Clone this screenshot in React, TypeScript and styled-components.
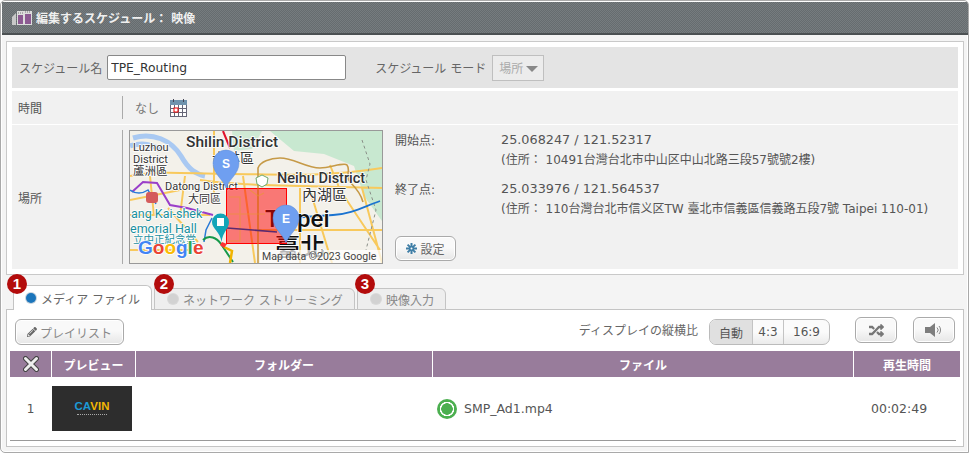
import React from "react";
import styled, { createGlobalStyle } from "styled-components";
import { FaPencilAlt, FaRandom } from "react-icons/fa";

const FONT = `"DejaVu Sans", "Noto Sans CJK JP", sans-serif`;

const GlobalStyle = createGlobalStyle`
  html, body { margin: 0; padding: 0; background: #fff; }
  body { font-family: ${FONT}; font-size: 12px; color: #555; }
  * { box-sizing: border-box; }
`;

const Frame = styled.div`
  width: 969px;
  height: 453px;
  border: 1px solid #a9a9a9;
  border-radius: 5px 5px 0 5px;
  background: #f4f4f4;
  overflow: hidden;
  box-shadow: inset 0 0 0 1px #fff;
`;

const Header = styled.div`
  height: 33px;
  margin: 1px 0 0 1px;
  display: flex;
  align-items: center;
  gap: 4px;
  padding: 0 0 0 10px;
  color: #f0f0f0;
  font-size: 12px;
  font-weight: 700;
  background: repeating-conic-gradient(#666c6f 0 25%, #767c7f 0 50%) 0 0 / 2px 2px;
  border-bottom: 2px solid #4b5052;
`;

const Body = styled.div`
  display: flex;
  flex-direction: column;
  padding: 6px 4px 0 5px;
`;

const Panel = styled.div`
  height: 234px;
  border: 1px solid #c9c9c9;
  background: #fff;
  padding: 5px;
  display: flex;
  flex-direction: column;
`;

const NameRow = styled.div`
  height: 41px;
  flex: none;
  background: #e4e4e4;
  display: flex;
  align-items: center;
  padding-left: 7px;
`;

const Field = styled.span`
  color: #666;
  font-size: 12px;
  white-space: nowrap;
`;

const NameInput = styled.input`
  width: 239px;
  height: 25px;
  border: 1px solid #888;
  border-radius: 2px;
  background: #fff;
  font-family: ${FONT};
  font-size: 12.3px;
  color: #333;
  padding: 0 3px;
  margin: 0 29px 0 5px;
`;

const Mode = styled.div`
  width: 52px;
  height: 26px;
  margin-left: 6px;
  border: 1px solid #bfbfbf;
  background: #ececec;
  color: #aaa;
  font-size: 12px;
  display: flex;
  align-items: center;
  padding-left: 6px;
  gap: 3px;
`;

const Caret = styled.i`
  width: 0;
  height: 0;
  border-left: 6px solid transparent;
  border-right: 6px solid transparent;
  border-top: 6px solid #888;
  margin-top: 2px;
`;

const InfoRow = styled.div<{ $h: number; $top: number }>`
  height: ${(p) => p.$h}px;
  margin-top: ${(p) => p.$top}px;
  flex: none;
  background: #f1f1f1;
  display: flex;
  align-items: center;
`;

const RowLabel = styled.div`
  width: 110px;
  padding-left: 6px;
  color: #555;
  font-size: 12px;
  flex: none;
`;

const RowValue = styled.div`
  align-self: stretch;
  flex: 1;
  margin: 5px 0;
  border-left: 1px solid #aaa;
  padding-left: 12px;
  display: flex;
  align-items: center;
  gap: 11px;
  color: #777;
`;

const PlaceValue = styled(RowValue)`
  padding-left: 6px;
  gap: 12px;
  align-items: flex-start;
`;

const MapBox = styled.div`
  width: 254px;
  height: 134px;
  border: 1px solid #999;
  flex: none;
  overflow: hidden;
`;

const Coords = styled.div`
  flex: 1;
  display: flex;
  flex-direction: column;
  color: #555;
  font-size: 12px;
`;

const CoordBlock = styled.div`
  display: grid;
  grid-template-columns: 106px 1fr;
  grid-auto-rows: 19px;
  align-items: center;
  white-space: nowrap;
  height: 49px;
`;

const Numeric = styled.span`
  font-size: 12.8px;
`;

const Sub = styled.div`
  grid-column: 2;
`;

const SoftButton = styled.button`
  display: inline-flex;
  align-items: center;
  justify-content: center;
  gap: 3px;
  border: 1px solid #aaa;
  border-radius: 6px;
  background: linear-gradient(#f9f9f9 0 45%, #e6e6e6 100%);
  color: #666;
  font-family: ${FONT};
  font-size: 12px;
  padding: 0;
  box-shadow: inset 0 0 0 1px #fff;
`;

const SettingButton = styled(SoftButton)`
  width: 61px;
  height: 25px;
  margin-top: 8px;
`;

const TabBar = styled.div`
  height: 35px;
  display: flex;
  align-items: flex-end;
  padding-left: 7px;
  margin-bottom: -1px;
`;

const Tab = styled.div<{ $active?: boolean; $w: number }>`
  position: relative;
  width: ${(p) => p.$w}px;
  height: ${(p) => (p.$active ? 25 : 22)}px;
  margin-right: 2px;
  background: ${(p) => (p.$active ? "#fff" : "#eee")};
  border: 1px solid #c4c4c4;
  border-bottom: ${(p) => (p.$active ? "none" : "1px solid #c4c4c4")};
  border-radius: 0 6px 0 0;
  display: flex;
  align-items: center;
  gap: 5px;
  padding-left: ${(p) => (p.$active ? 12 : 13)}px;
  color: ${(p) => (p.$active ? "#666" : "#888")};
  font-size: 12px;
  white-space: nowrap;
  z-index: ${(p) => (p.$active ? 2 : 1)};
`;

const Dot = styled.i<{ $on?: boolean }>`
  width: 10px;
  height: 10px;
  border-radius: 50%;
  flex: none;
  background: ${(p) => (p.$on ? "#1b75bb" : "#d2d2d2")};
  box-shadow: 0 0 0 1px ${(p) => (p.$on ? "#c7d3dd" : "#d8d8d8")};
`;

const Badge = styled.b<{ $left: number; $top: number }>`
  position: absolute;
  left: ${(p) => p.$left}px;
  top: ${(p) => p.$top}px;
  width: 20px;
  height: 20px;
  border-radius: 50%;
  background: #b30c0c;
  color: #fff;
  font-family: "Liberation Sans", sans-serif;
  font-size: 15px;
  line-height: 20px;
  text-align: center;
`;

const Content = styled.div`
  height: 138px;
  background: #fff;
  border: 1px solid #c4c4c4;
  padding: 8px 3px 0;
`;

const Toolbar = styled.div`
  height: 33px;
  display: flex;
  align-items: flex-start;
  padding: 0 5px;
`;

const PlaylistButton = styled(SoftButton)`
  width: 109px;
  height: 26px;
  margin-top: 1px;
  color: #888;
`;

const AspectLabel = styled.span`
  margin-left: auto;
  margin-right: 11px;
  line-height: 27px;
  color: #666;
`;

const Segments = styled.div`
  display: flex;
  width: 121px;
  height: 26px;
  margin-top: 1px;
  border: 1px solid #bbb;
  border-radius: 7px;
  overflow: hidden;
  background: linear-gradient(#fbfbfb 0 50%, #ebebeb 100%);
`;

const Segment = styled.div<{ $on?: boolean; $w: number }>`
  width: ${(p) => p.$w}px;
  display: flex;
  align-items: center;
  justify-content: center;
  color: #555;
  font-size: 12px;
  background: ${(p) => (p.$on ? "#e0e0e0" : "transparent")};
  & + & {
    border-left: 1px solid #c4c4c4;
  }
`;

const IconButton = styled(SoftButton)<{ $gap: number }>`
  width: 42px;
  height: 26px;
  margin-top: -1px;
  margin-left: ${(p) => p.$gap}px;
  color: #777;
  font-size: 15px;
`;

const GridRow = styled.div`
  display: grid;
  grid-template-columns: 41px 84px 297px 421px 1fr;
  width: 950px;
`;

const HeadCell = styled.div`
  height: 26px;
  background: #987c9b;
  color: #fff;
  font-weight: 700;
  font-size: 12px;
  display: flex;
  align-items: center;
  justify-content: center;
  border-left: 1px solid #fff;
  &:first-child {
    border-left: none;
  }
`;

const DataRow = styled(GridRow)`
  height: 64px;
  border-bottom: 1px solid #999;
  align-items: center;
  width: 946px;
  color: #555;
  font-size: 12.5px;
`;

const RowNumber = styled.div`
  text-align: center;
  font-size: 12px;
`;

const Thumb = styled.div`
  width: 80px;
  height: 45px;
  background: #2d2d2d;
  margin-left: 1px;
  display: flex;
  flex-direction: column;
  align-items: center;
  justify-content: center;
`;

const LogoText = styled.div`
  font-family: "Liberation Sans", sans-serif;
  font-weight: 700;
  font-size: 11.5px;
  line-height: 9px;
  color: #f2b705;
`;

const LogoBlue = styled.span`
  color: #1c9ad6;
`;

const LogoLine = styled.div`
  width: 30px;
  height: 1px;
  margin-top: 3px;
  border-top: 1px dotted #aaa;
`;

const FileCell = styled.div`
  display: flex;
  align-items: center;
  gap: 7px;
  padding-left: 5px;
`;

const Status = styled.i`
  width: 20px;
  height: 20px;
  border-radius: 50%;
  flex: none;
  background: radial-gradient(circle, #4caf50 0 5.5px, #fff 6px 7px, #4caf50 7.5px);
`;

const Duration = styled.div`
  padding-left: 18px;
`;

const Film = () => (
  <svg width="20" height="16" viewBox="0 0 20 16">
    <path d="M0 7 4 3v12H0z" fill="#c8c8c8" />
    <rect x="5" y="1" width="15" height="14" fill="#dcdcdc" />
    <rect x="6" y="5" width="5" height="9" fill="#8c5a92" />
    <rect x="13" y="4" width="6" height="10" fill="#8c5a92" />
    <path d="M6 3h1M8 3h1M10 3h1M13 2h1M15 2h1M17 2h1" stroke="#777" />
  </svg>
);

const Calendar = () => (
  <svg width="17" height="18" viewBox="0 0 17 18">
    <rect x="0.5" y="1.5" width="16" height="16" fill="#fff" stroke="#667" />
    <rect x="0" y="1" width="17" height="5" fill="#6f93ad" />
    <path d="M3.5 0v3M13.5 0v3" stroke="#445" />
    <path d="M4.5 6v11M8.5 6v11M12.5 6v11M1 9.5h15M1 13.5h15" stroke="#667" />
    <rect x="4" y="9" width="4" height="4" fill="#fff" stroke="#e00" />
  </svg>
);

const Cross = () => (
  <svg width="16" height="16" viewBox="0 0 16 16">
    <path d="M2.5 2.5 13.5 13.5M13.5 2.5 2.5 13.5" stroke="#444" strokeWidth="5" strokeLinecap="round" />
    <path d="M2.5 2.5 13.5 13.5M13.5 2.5 2.5 13.5" stroke="#eee" strokeWidth="3" strokeLinecap="round" />
  </svg>
);

const Gear = () => (
  <svg width="11" height="11" viewBox="0 0 11 11">
    <path d="M5.5 0v11M0 5.5h11M1.600 1.600l7.800 7.800M9.400 1.600 1.600 9.400" stroke="#3f7ea6" strokeWidth="2" />
    <circle cx="5.5" cy="5.5" r="1" fill="#fff" />
  </svg>
);

const Speaker = () => (
  <svg width="18" height="14" viewBox="0 0 18 14">
    <path d="M0 4h5l5-4v14l-5-4H0z" fill="#7d7d7d" />
    <path d="M12 4.500a3.500 3.500 0 0 1 0 5M14 3a6 6 0 0 1 0 8" fill="none" stroke="#777" strokeWidth="0.9" />
  </svg>
);

const Pin = ({ x, y, letter }: { x: number; y: number; letter: string }) => (
  <g transform={`translate(${x} ${y})`}>
    <path d="M0 0C-3-9-13-14-13-25A13 13 0 0 1 13-25C13-14 3-9 0 0Z" fill="#6f9ff0" stroke="#5b8ad8" strokeWidth="0.5" />
    <text x="0" y="-20" textAnchor="middle" fontSize="12" fontWeight="700" fill="#fff" fontFamily="Liberation Sans">{letter}</text>
  </g>
);

const MapLabel = styled.text<{ $size: number; $color?: string; $bold?: boolean }>`
  font-family: "Roboto", "Noto Sans CJK TC", sans-serif;
  font-size: ${(p) => p.$size}px;
  font-weight: ${(p) => (p.$bold ? 500 : 400)};
  fill: ${(p) => p.$color || "#333"};
  paint-order: stroke;
  stroke: #fff;
  stroke-width: 1.5px;
`;

const TaipeiMap = () => (
  <svg width="252" height="132" viewBox="130 131 252 132">
    <rect x="130" y="131" width="252" height="132" fill="#f3f1ea" />
    <path d="M270 131h112v90l-18-25-10-30-30-12-30-3z" fill="#c8e8d0" />
    <path d="M232 131h30l-10 18-18 2z" fill="#cfe9d4" />
    <path d="M133 138c20-6 38 2 48 18 8 14 15 18 24 20 M130 146c12-4 22-2 30 4" fill="none" stroke="#a9c9f2" strokeWidth="5" />
    <path d="M130 176c30-6 60-2 100-2s90 4 152-6M200 180c40 6 100 6 182 8M214 131v68M243 176l12 87M300 188v75M130 215h80M168 208l30 34M310 190l22 73M340 190l40 60M362 188l20 75M130 250h60M258 230h124M150 176l4 40M185 176l-5 40M130 200l60-12M330 165l10 25" stroke="#f8c95c" strokeWidth="2" fill="none" />
    <path d="M362 140l8 24-4 16 10 30-10 40" stroke="#8a8f88" strokeWidth="1" strokeDasharray="3 3" fill="none" />
    <path d="M132 192l11-10 14 1 13 22 17 3 26 7" fill="none" stroke="#9a3fc9" strokeWidth="2" />
    <path d="M258 263v-95c2-6 12-10 22-10 14 0 26 10 40 10 10 0 24-6 27-3 4 5-2 12 3 17 6 6 11 12 13 20" fill="none" stroke="#c69a47" strokeWidth="1.6" />
    <path d="M290 218l43-3c18-1 30-8 47-14" fill="none" stroke="#1a73d0" strokeWidth="1.800" />
    <path d="M223 131l7 17" stroke="#e0112b" strokeWidth="2" />
    <path d="M212 218l-6 12-2 12M130 190c6 4 12 4 18 0l8 14" stroke="#2b7bd6" strokeWidth="1.500" fill="none" />
    <path d="M203 240c6-6 14-2 18 4l12 18" stroke="#16994a" strokeWidth="2" fill="none" />
    <path d="M224 247l8 4-2 12" stroke="#f0b400" strokeWidth="2.500" fill="none" />
    <rect x="146" y="192" width="12" height="11" rx="3" fill="#d45c5c" />
    <path d="M256 178l6-3 6 3-1 6-5 3-5-3z" fill="#fff" stroke="#6ea96e" />
    <MapLabel x="186" y="147" $size={15.5} $bold>Shilin District</MapLabel>
    <MapLabel x="212" y="163" $size={14}>士林區</MapLabel>
    <MapLabel x="133" y="151" $size={11}>Luzhou</MapLabel>
    <MapLabel x="133" y="163" $size={11}>District</MapLabel>
    <MapLabel x="133" y="175" $size={11.5}>蘆洲區</MapLabel>
    <MapLabel x="165" y="190" $size={11}>Datong District</MapLabel>
    <MapLabel x="188" y="203" $size={11}>大同區</MapLabel>
    <MapLabel x="277" y="183" $size={14.5} $bold>Neihu District</MapLabel>
    <MapLabel x="302" y="200" $size={15}>內湖區</MapLabel>
    <MapLabel x="131" y="218" $size={12.5} $color="#1a8f9e">ang Kai-shek</MapLabel>
    <MapLabel x="130" y="233" $size={12.5} $color="#1a8f9e">emorial Hall</MapLabel>
    <MapLabel x="133" y="243" $size={10.5} $color="#1a8f9e">立中正紀念堂</MapLabel>
    <MapLabel x="265" y="227" $size={24} $color="#111" $bold>Taipei</MapLabel>
    <MapLabel x="275" y="256" $size={25} $color="#111" $bold>臺北</MapLabel>
    <rect x="226.5" y="188.5" width="60" height="55" fill="#ff0000" fillOpacity="0.5" stroke="#ff0000" strokeWidth="1" />
    <path d="M229 197h11v44h-11M258 188v56M250 190l8 6 6-3M227 214h38" fill="none" stroke="#e89a30" strokeWidth="1.200" opacity="0.6" />
    <path d="M227 228l50 4" fill="none" stroke="#5b2a70" strokeWidth="1.600" />
    <path d="M222 242l5 2-3 4-4-3z" fill="#f33" />
    <Pin x={226} y={188} letter="S" />
    <Pin x={286} y={243} letter="E" />
    <path d="M212 222a8.500 8.500 0 1 1 17 0c0 7-6 9-7.500 20-1.500-11-9.500-13-9.500-20z" fill="#12a5b8" />
    <rect x="217" y="218" width="7" height="8" fill="#fff" />
    <text x="138" y="254" fontFamily="Liberation Sans" fontWeight="700" fontSize="19" stroke="#fff" strokeWidth="1.500" paintOrder="stroke">
      <tspan fill="#4285f4">G</tspan><tspan fill="#ea4335">o</tspan><tspan fill="#fbbc05">o</tspan><tspan fill="#4285f4">g</tspan><tspan fill="#34a853">l</tspan><tspan fill="#ea4335">e</tspan>
    </text>
    <rect x="260" y="250" width="122" height="13" fill="#fff" fillOpacity="0.7" />
    <text x="262" y="260" fontFamily="Roboto" fontSize="10.500" fill="#444">Map data ©2023 Google</text>
  </svg>
);

export default function App() {
  return (
    <>
      <GlobalStyle />
      <Frame>
        <Header>
          <Film />
          <span>編集するスケジュール： 映像</span>
        </Header>
        <Body>
          <Panel>
            <NameRow>
              <Field>スケジュール名</Field>
              <NameInput defaultValue="TPE_Routing" />
              <Field>スケジュール モード</Field>
              <Mode>
                場所 <Caret />
              </Mode>
            </NameRow>
            <InfoRow $h={33} $top={3}>
              <RowLabel>時間</RowLabel>
              <RowValue>
                <span>なし</span>
                <Calendar />
              </RowValue>
            </InfoRow>
            <InfoRow $h={144} $top={1}>
              <RowLabel>場所</RowLabel>
              <PlaceValue>
                <MapBox>
                  <TaipeiMap />
                </MapBox>
                <Coords>
                  <CoordBlock>
                    <span>開始点:</span>
                    <Numeric>25.068247 / 121.52317</Numeric>
                    <Sub>(住所： 10491台灣台北市中山区中山北路三段57號號2樓)</Sub>
                  </CoordBlock>
                  <CoordBlock>
                    <span>終了点:</span>
                    <Numeric>25.033976 / 121.564537</Numeric>
                    <Sub>(住所： 110台灣台北市信义区TW 臺北市信義區信義路五段7號 Taipei 110-01)</Sub>
                  </CoordBlock>
                  <div>
                    <SettingButton>
                      <Gear />
                      設定
                    </SettingButton>
                  </div>
                </Coords>
              </PlaceValue>
            </InfoRow>
          </Panel>
          <TabBar>
            <Tab $active $w={139}>
              <Badge $left={-7} $top={-12}>1</Badge>
              <Dot $on />
              メディア ファイル
            </Tab>
            <Tab $w={201}>
              <Badge $left={-1} $top={-15}>2</Badge>
              <Dot />
              ネットワーク ストリーミング
            </Tab>
            <Tab $w={89}>
              <Badge $left={-3} $top={-15}>3</Badge>
              <Dot />
              映像入力
            </Tab>
          </TabBar>
          <Content>
            <Toolbar>
              <PlaylistButton>
                <FaPencilAlt size={10} color="#666" />
                プレイリスト
              </PlaylistButton>
              <AspectLabel>ディスプレイの縦横比</AspectLabel>
              <Segments>
                <Segment $on $w={42}>自動</Segment>
                <Segment $w={31}>4:3</Segment>
                <Segment $w={46}>16:9</Segment>
              </Segments>
              <IconButton $gap={25}>
                <FaRandom />
              </IconButton>
              <IconButton $gap={16}>
                <Speaker />
              </IconButton>
            </Toolbar>
            <GridRow>
              <HeadCell>
                <Cross />
              </HeadCell>
              <HeadCell>プレビュー</HeadCell>
              <HeadCell>フォルダー</HeadCell>
              <HeadCell>ファイル</HeadCell>
              <HeadCell>再生時間</HeadCell>
            </GridRow>
            <DataRow>
              <RowNumber>1</RowNumber>
              <Thumb>
                <LogoText>
                  <LogoBlue>CA</LogoBlue>VIN
                </LogoText>
                <LogoLine />
              </Thumb>
              <div />
              <FileCell>
                <Status />
                SMP_Ad1.mp4
              </FileCell>
              <Duration>00:02:49</Duration>
            </DataRow>
          </Content>
        </Body>
      </Frame>
    </>
  );
}
